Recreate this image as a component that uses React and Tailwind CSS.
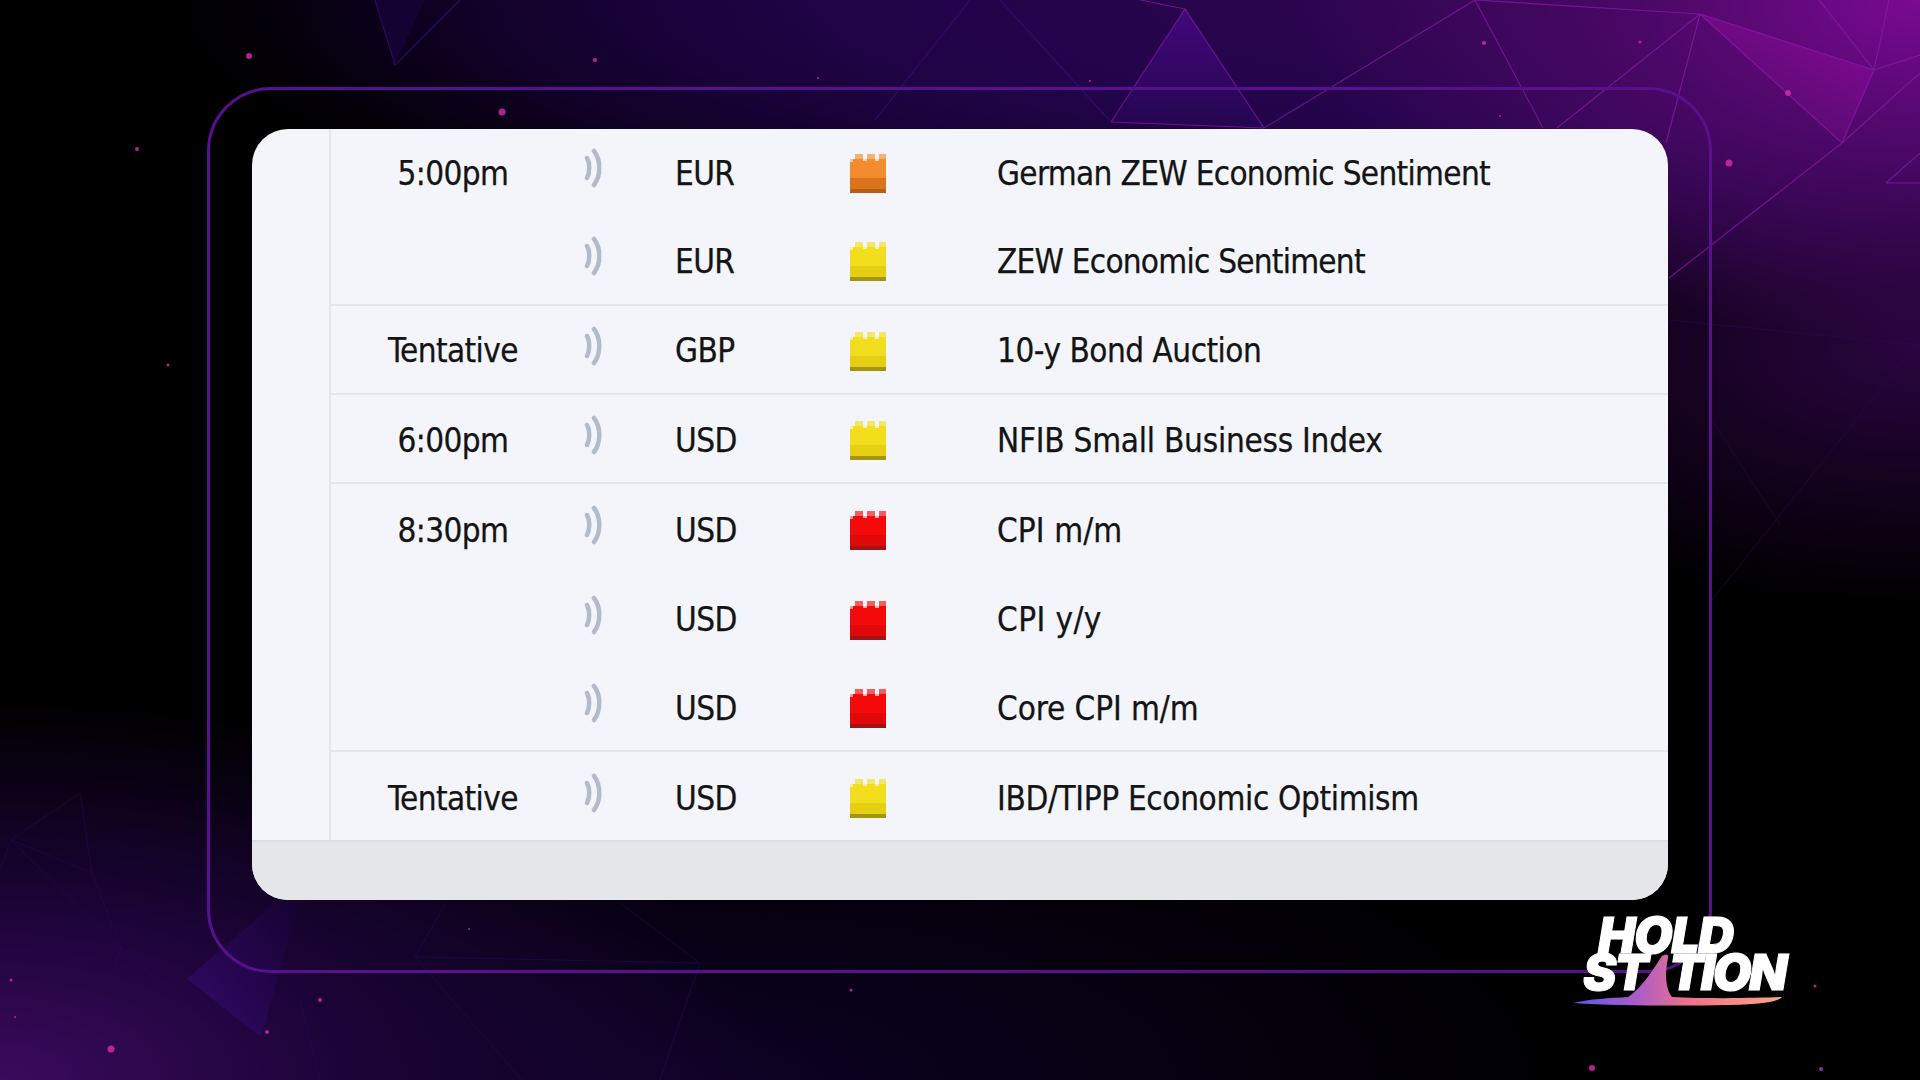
const rows = [
  { time: "5:00pm", cur: "EUR", level: "orange", title: "German ZEW Economic Sentiment", line: false, track: "tracking-[-0.68px]" },
  { time: "", cur: "EUR", level: "yellow", title: "ZEW Economic Sentiment", line: true, track: "tracking-[-0.76px]" },
  { time: "Tentative", cur: "GBP", level: "yellow", title: "10-y Bond Auction", line: true, track: "tracking-[-0.5px]" },
  { time: "6:00pm", cur: "USD", level: "yellow", title: "NFIB Small Business Index", line: true, track: "tracking-[-0.25px]" },
  { time: "8:30pm", cur: "USD", level: "red", title: "CPI m/m", line: false, track: "tracking-[0.1px]" },
  { time: "", cur: "USD", level: "red", title: "CPI y/y", line: false, track: "tracking-[0.4px]" },
  { time: "", cur: "USD", level: "red", title: "Core CPI m/m", line: true, track: "tracking-[-0.1px]" },
  { time: "Tentative", cur: "USD", level: "yellow", title: "IBD/TIPP Economic Optimism", line: false, track: "tracking-[-0.35px]" },
];

const palette = {
  orange: ["#f28c2e", "#d9741c", "#b85e14"],
  yellow: ["#f3de1e", "#e6cf12", "#a39510"],
  red: ["#f40a0a", "#e00808", "#a01414"],
};

function Sound() {
  return (
    <svg width="20" height="40" viewBox="0 0 20 40" fill="none" stroke="#b2bbc9" strokeLinecap="round" className="block blur-[0.5px]">
      <path d="M3 10 C6 15 6 24 3 30" strokeWidth="4.5" />
      <path d="M10 3 C17 12 17 28 10 37" strokeWidth="4.5" />
    </svg>
  );
}

function Impact({ level }) {
  const [main, low, dark] = palette[level];
  return (
    <svg width="36" height="39" viewBox="0 0 36 39" className="block blur-[0.4px]">
      <rect x="5" y="0" width="8" height="7" fill={main} opacity="0.65" />
      <rect x="17" y="0" width="8" height="7" fill={main} opacity="0.65" />
      <rect x="29" y="0" width="7" height="7" fill={main} opacity="0.65" />
      <rect x="0" y="5" width="36" height="34" fill={main} />
      <rect x="0" y="5" width="3" height="3" fill="#f3f5fa" opacity="0.6" />
      <rect x="13" y="4" width="4" height="3" fill="#f3f5fa" opacity="0.7" />
      <rect x="25" y="4" width="4" height="3" fill="#f3f5fa" opacity="0.7" />
      <rect x="0" y="24" width="36" height="12" fill={low} />
      <rect x="0" y="35" width="36" height="4" fill={dark} />
    </svg>
  );
}

const lines = [
  [1700,14,1842,143],[1842,143,1874,70],[1874,70,1700,14],[1475,0,1700,14],[1475,0,1543,128],[1264,128,1475,0],[1557,128,1700,14],[1666,143,1700,14],
  [1669,278,1842,143],[1842,143,1920,73],[1874,70,1920,55],[1819,0,1874,70],[1889,0,1874,70],[1886,183,1920,153],[1886,183,1920,183],
  [1185,9,1111,122],[1185,9,1264,128],[1111,122,1264,128],[1000,0,1111,122],[1140,0,1185,9],[970,0,875,120],
  [375,0,395,65],[395,65,460,0],
];

const faint = [
  [1712,600,1920,340],[1669,320,1920,345],[1712,420,1780,525],
  [11,840,92,873],[92,873,121,948],[11,840,121,948],[11,840,80,793],[0,870,11,840],[92,873,80,793],[0,1040,121,1000],[121,948,70,1080],[121,948,270,1080],
  [415,957,700,963],[415,957,446,903],[415,957,522,1080],[620,903,700,963],[700,963,660,1080],[300,1000,320,1080],
];

const polys = [
  { p: "1700,14 1874,70 1842,143", fill: "url(#mag)" },
  { p: "1185,9 1111,122 1264,128", fill: "url(#vio)" },
  { p: "187,979 290,890 300,900 261,1037", fill: "url(#low)" },
  { p: "375,0 395,65 425,0", fill: "#140232" },
];

const dots = [
  [249,56,3],[595,60,2],[502,112,3.5],[137,149,2],[168,365,1.5],[1729,163,3.5],[1788,93,3],[1484,43,2],[1640,42,1.5],[1500,116,1],
  [111,1049,3.5],[267,1032,2],[320,1000,2],[11,980,1.5],[15,1017,1],[1592,1068,3],[1821,1069,2],[1815,986,1.5],[851,990,1.5],[469,929,1],[818,78,1],[1090,81,1],
];

function Background() {
  return (
    <svg className="absolute inset-0" width="1920" height="1080" viewBox="0 0 1920 1080">
      <defs>
        <linearGradient id="mag" x1="1" y1="0" x2="0.3" y2="1">
          <stop offset="0" stopColor="#8a0a9a" />
          <stop offset="1" stopColor="#4e0a68" />
        </linearGradient>
        <linearGradient id="vio" x1="0.5" y1="0" x2="0.5" y2="1">
          <stop offset="0" stopColor="#42087c" />
          <stop offset="1" stopColor="#240650" />
        </linearGradient>
        <linearGradient id="low" x1="0" y1="1" x2="1" y2="0">
          <stop offset="0" stopColor="#34086a" />
          <stop offset="1" stopColor="#14022e" />
        </linearGradient>
      </defs>
      {polys.map((x, i) => <polygon key={i} points={x.p} fill={x.fill} />)}
      {lines.map(([a, b, c, d], i) => (
        <line key={i} x1={a} y1={b} x2={c} y2={d} stroke={a > 1000 ? "#8a1aa8" : "#3a0c78"} strokeWidth="1.2" opacity="0.7" />
      ))}
      {faint.map(([a, b, c, d], i) => (
        <line key={i} x1={a} y1={b} x2={c} y2={d} stroke="#2a0a58" strokeWidth="1" opacity="0.5" />
      ))}
      {dots.map(([x, y, r], i) => <circle key={i} cx={x} cy={y} r={r} fill="#d02aa8" opacity="0.85" />)}
    </svg>
  );
}

function Logo() {
  return (
    <div className="absolute left-[1570px] top-[910px] w-[230px] h-[100px] italic font-black text-white [-webkit-text-stroke:1px_white]" style={{ fontFamily: "Inter, 'Liberation Sans', sans-serif" }}>
      <div className="absolute left-[28px] top-[7px] text-[50px] leading-[36px] tracking-[-1.5px]">HOLD</div>
      <div className="absolute left-[13px] top-[44px] text-[50px] leading-[36px] tracking-[-2px]">ST</div>
      <div className="absolute left-[99px] top-[44px] text-[50px] leading-[36px] tracking-[-2.6px]">TION</div>
      <svg className="absolute left-0 top-0" width="230" height="100" viewBox="0 0 230 100">
        <defs>
          <linearGradient id="logo" x1="0" y1="0" x2="1" y2="0">
            <stop offset="0" stopColor="#5a58e8" />
            <stop offset="0.3" stopColor="#a85cc8" />
            <stop offset="0.55" stopColor="#f0708c" />
            <stop offset="1" stopColor="#fba585" />
          </linearGradient>
        </defs>
        <path d="M3 93 C20 89 40 88 58 87 C72 78 84 58 92 46 C96 44 99 44 98 48 C95 62 95 78 102 87 C140 89 190 88 212 87 C208 92 190 94 160 95 C110 96 50 96 3 93 Z" fill="url(#logo)" />
      </svg>
    </div>
  );
}

export default function App() {
  return (
    <div className="relative w-[1920px] h-[1080px] overflow-hidden bg-black bg-[radial-gradient(ellipse_620px_340px_at_100%_0%,#7a0a92_0%,#4a0866_45%,rgba(40,4,70,0)_100%),radial-gradient(ellipse_1250px_300px_at_78%_0%,#2e0550_0%,#22044a_45%,rgba(10,0,30,0)_100%),radial-gradient(ellipse_520px_260px_at_100%_32%,#2a0540_0%,rgba(10,0,20,0)_100%),radial-gradient(ellipse_760px_380px_at_0%_100%,#3a0a5c_0%,#1c0438_45%,rgba(0,0,0,0)_100%),radial-gradient(ellipse_700px_220px_at_45%_0%,#130030_0%,rgba(0,0,0,0)_100%),radial-gradient(ellipse_900px_300px_at_35%_100%,#0e0226_0%,rgba(0,0,0,0)_100%)] pl-[207px] pt-[87px]">
      <Background />
      <div className="relative w-[1505px] h-[886px] rounded-[64px] border-[3px] border-[#59108f] pl-[42px] pt-[39px]">
        <div className="w-[1416px] h-[771px] rounded-[36px] overflow-hidden bg-[#f3f5fa] flex flex-col text-[#141414] text-[33px] [-webkit-text-stroke:0.25px_#141414]" style={{ fontFamily: "'DejaVu Sans Condensed', 'DejaVu Sans', sans-serif" }}>
          <div className="flex-1 min-h-0 pl-[77px] overflow-hidden">
            <div className="border-l-2 border-[#e4e6eb] -mt-[2px] h-[720px]">
              {rows.map((r, i) => (
                <div key={i} className={`flex items-center h-[89.33px] ${r.line ? "border-b-2 border-[#e4e6eb]" : ""}`}>
                  <div className="w-[244px] text-center leading-none pt-[3px] tracking-[-0.6px]">{r.time}</div>
                  <div className="w-[100px] pl-[9px] pb-[7px]"><Sound /></div>
                  <div className="w-[175px] leading-none pt-[3px] tracking-[-0.6px]">{r.cur}</div>
                  <div className="w-[147px] pt-[4px]"><Impact level={r.level} /></div>
                  <div className={`flex-1 leading-none pt-[3px] whitespace-nowrap ${r.track}`}>{r.title}</div>
                </div>
              ))}
            </div>
          </div>
          <div className="h-[60px] shrink-0 bg-[#e5e6ea] border-t-2 border-[#dcdee3]"></div>
        </div>
      </div>
      <Logo />
    </div>
  );
}
